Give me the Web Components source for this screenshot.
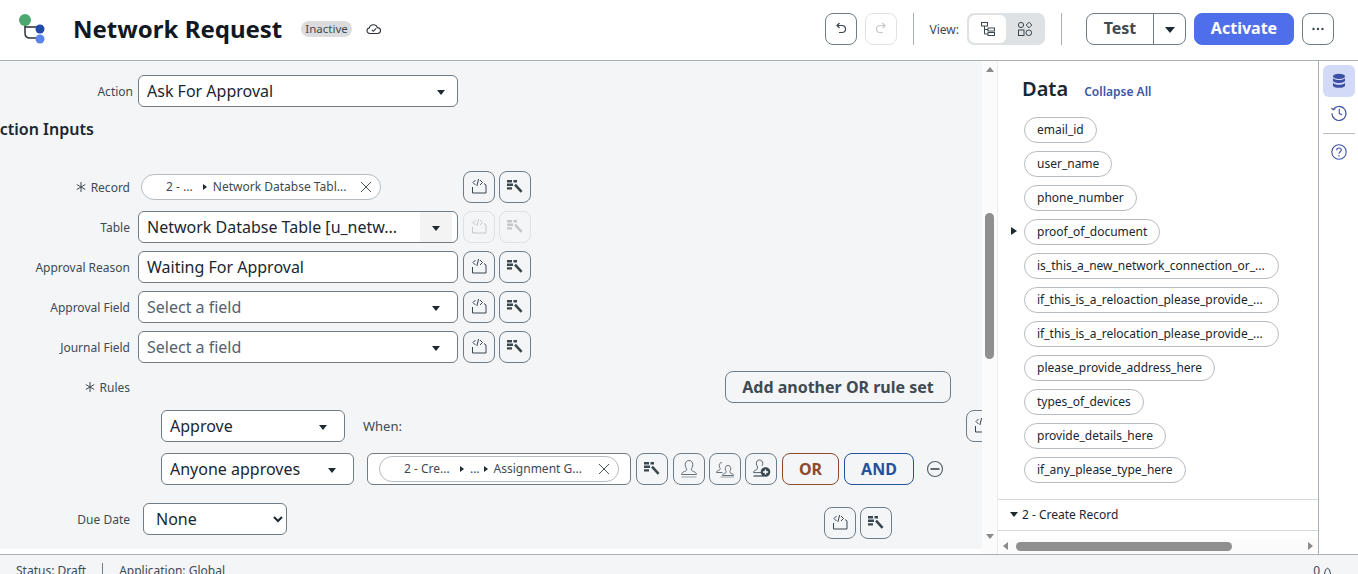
<!DOCTYPE html>
<html lang="en">
<head>
<meta charset="utf-8">
<title>Network Request</title>
<style>
  html, body { margin: 0; height: 574px; overflow: hidden; background: #fff; }
  body { font-family: "Noto Sans", "Liberation Sans", sans-serif; color: #1a2730; }
</style>
</head>
<body>
<flow-header></flow-header>
<flow-main></flow-main>
<status-bar></status-bar>

<script>
const ICONS = {
  code: `<path d="M9.500 16v6h13.500v-8l-2-1.500" fill="none" stroke="currentColor" stroke-width="1"/><path d="M12.500 9l-2.500 2.500 2.500 2.500M15.600 8l-1.700 7M17 9l2.500 2.500-2.500 2.500" fill="none" stroke="currentColor" stroke-width="1"/>`,
  pill: `<path fill="currentColor" d="M8 9h5v2.400H8zM14.500 9H18v2.400h-3.500zM8 12.600h6V15H8zM8 16.200h5v2.400H8z"/><path d="M16 13.600l6.600 7.200" stroke="currentColor" stroke-width="2.600"/>`,
  person: `<path d="M16 7.500c-2.500 0-3.800 2-3.800 4.200 0 2 1 3.200 1.400 4.400.3 1.200-.6 1.800-2 2.400-1.600.6-3 1-3 3h14.800c0-2-1.400-2.400-3-3-1.400-.6-2.300-1.200-2-2.400.4-1.200 1.400-2.400 1.400-4.400 0-2.200-1.300-4.200-3.800-4.200z" fill="none" stroke="#55626c" stroke-width=".9"/><path d="M8.500 24h15" stroke="#9aa3a9" stroke-width="1"/>`,
  group: `<path d="M13 9.500c-1.800 0-2.800 1.400-2.800 3 0 1.400.7 2.300 1 3.100.2.800-.4 1.300-1.400 1.700-1.200.5-2.300.8-2.300 2.200h6" fill="none" stroke="#55626c" stroke-width=".9"/><path d="M19 12.500c-1.800 0-2.800 1.400-2.800 3 0 1.400.7 2.300 1 3.100.2.800-.4 1.300-1.400 1.700-1.200.5-2.300.8-2.300 2.200h11c0-1.400-1.100-1.700-2.300-2.200-1-.4-1.600-.9-1.400-1.700.3-.8 1-1.700 1-3.100 0-1.600-1-3-2.800-3z" fill="none" stroke="#55626c" stroke-width=".9"/><path d="M11.500 24h13.500" stroke="#9aa3a9" stroke-width="1"/>`,
  personadd: `<path d="M14.500 7c-2 0-3.200 1.600-3.200 3.400 0 1.600.9 2.600 1.200 3.600.2 1.400-.3 2.400-1.500 3-1.300.6-2.500 1-2.500 2.600h8" fill="none" stroke="#55626c" stroke-width="1"/><path d="M8.500 23h10" stroke="#55626c" stroke-width="1.400"/><path d="M14.500 7c2 0 3.200 1.600 3.200 3.400 0 1-.3 1.800-.6 2.400" fill="none" stroke="#55626c" stroke-width="1"/><circle cx="20.500" cy="19" r="4.800" fill="#3a464e"/><path d="M20.500 16.400v5.200M17.900 19h5.200" stroke="#fff" stroke-width="1.400"/>`,
  undo: `<path d="M14.500 10l-2.500 2.500 2.500 2.500M12.500 12.500h4.500c2.200 0 3.500 1.500 3.500 3.500s-1.300 3.500-3.500 3.500h-3" fill="none" stroke="currentColor" stroke-width="1.200"/>`,
  redo: `<path d="M17.500 10l2.500 2.500-2.500 2.500M19.500 12.500H15c-2.200 0-3.500 1.500-3.500 3.500s1.300 3.500 3.500 3.500h3" fill="none" stroke="currentColor" stroke-width="1.200"/>`,
  dots: `<circle cx="11.500" cy="16" r="1.200" fill="currentColor"/><circle cx="16" cy="16" r="1.200" fill="currentColor"/><circle cx="20.500" cy="16" r="1.200" fill="currentColor"/>`
};

const svgIcon = (name, w = 32, h = 32) =>
  `<svg width="${w}" height="${h}" viewBox="0 0 32 32" style="display:block">${ICONS[name]}</svg>`;

class IconBtn extends HTMLElement {
  connectedCallback() {
    const off = this.hasAttribute("disabled");
    const w = this.getAttribute("w") || 32;
    this.attachShadow({ mode: "open" }).innerHTML = `
    <style>
    :host {
      display: block;
      flex: none;
      box-sizing: border-box;
      width: ${w}px;
      height: 32px;
      border: 1px solid ${off ? "#dfe2e4" : "#6f7c85"};
      border-radius: 8px;
      color: ${off ? "#c4c8cb" : "#3a464e"};
    }
    svg { margin: -1px 0 0 ${(w - 32) / 2 - 1}px; }
    </style>
    ${svgIcon(this.getAttribute("name"))}`;
  }
}
customElements.define("icon-btn", IconBtn);

class FlowButton extends HTMLElement {
  constructor() {
    super();
    this.attachShadow({ mode: "open" }).innerHTML = `
    <style>
    :host {
      display: flex;
      flex: none;
      box-sizing: border-box;
      height: 32px;
      align-items: center;
      justify-content: center;
      border: 1px solid #6f7c85;
      border-radius: 8px;
      font-size: 16px;
      font-weight: 700;
      color: #3f4a52;
    }
    :host([kind=or]) { border-color: #8d4a2b; color: #8d4a2b; }
    :host([kind=and]) { border-color: #24529b; color: #24529b; }
    :host([kind=primary]) { border-color: #4f6fea; background: #4f6fea; color: #fff; padding-bottom: 2px; }
    </style>
    <slot></slot>`;
  }
}
customElements.define("flow-button", FlowButton);

class FlowSelect extends HTMLElement {
  constructor() {
    super();
    this.attachShadow({ mode: "open" }).innerHTML = `
    <style>
    :host {
      display: flex;
      flex: none;
      box-sizing: border-box;
      height: 32px;
      align-items: center;
      padding: 0 5px 0 8px;
      background: #fff;
      border: 1px solid #6f7c85;
      border-radius: 6px;
      font-size: 16px;
      color: #1a2730;
    }
    :host([muted]) { color: #55626c; }
    .text { flex: 1; white-space: nowrap; overflow: hidden; padding-bottom: 1px; }
    .caret {
      flex: none;
      width: 32px;
      align-self: stretch;
      display: flex;
      align-items: center;
      justify-content: center;
    }
    :host([shaded]) .caret { background: #f3f3f3; }
    :host([narrow]) .caret { width: 22px; }
    :host([text-only]) .caret { display: none; }
    .caret i {
      margin-top: 3px;
      border: 4.500px solid transparent;
      border-top: 5px solid #1e2a32;
      border-bottom: 0;
    }
    </style>
    <span class="text"><slot></slot></span>
    <span class="caret"><i></i></span>`;
  }
}
customElements.define("flow-select", FlowSelect);

class FormRow extends HTMLElement {
  constructor() {
    super();
    this.attachShadow({ mode: "open" }).innerHTML = `
    <style>
    :host {
      display: flex;
      align-items: center;
      height: 32px;
      margin-top: 8px;
    }
    .label {
      flex: none;
      width: var(--label-w, 130px);
      display: flex;
      justify-content: flex-end;
      align-items: center;
      gap: 5px;
      font-size: 12px;
      color: #3d4a54;
      white-space: nowrap;
    }
    .star { display: block; flex: none; }
    .fields { display: flex; align-items: center; gap: 5px; margin-left: var(--label-gap, 8px); flex: 1; }
    .tools { display: flex; gap: 4px; }
    </style>
    <span class="label"></span>
    <div class="fields"><slot></slot><span class="tools"><slot name="tools"></slot></span></div>`;
    const label = this.shadowRoot.querySelector(".label");
    label.textContent = this.getAttribute("label") || "";
    if (this.hasAttribute("required")) {
      label.insertAdjacentHTML("afterbegin",
        `<svg class="star" width="10" height="10" viewBox="0 0 10 10" stroke="#3d4a54" stroke-width="1"><path d="M5 0v10M.7 2.500l8.600 5M9.300 2.500l-8.600 5"/></svg>`);
    }
  }
}
customElements.define("form-row", FormRow);

class RefPill extends HTMLElement {
  constructor() {
    super();
    this.attachShadow({ mode: "open" }).innerHTML = `
    <style>
    :host {
      display: flex;
      flex: none;
      box-sizing: border-box;
      height: 26px;
      align-items: center;
      padding: 0 8px 0 24px;
      background: #fff;
      border: 1px solid #b5bcc2;
      border-radius: 13px;
      font-size: 12px;
      color: #3d4a54;
      white-space: nowrap;
    }
    .path { flex: 1; display: flex; align-items: center; padding-bottom: 1px; }
    ::slotted(i) {
      display: block;
      margin: 0 6px 0 4px;
      border: 3.500px solid transparent;
      border-left: 4px solid #1e2a32;
      border-right: 0;
    }
    svg { flex: none; }
    </style>
    <span class="path"><slot></slot></span>
    <svg width="12" height="12" viewBox="0 0 12 12"><path d="M1 1l10 10M11 1L1 11" stroke="#48545c" stroke-width="1"/></svg>`;
  }
}
customElements.define("ref-pill", RefPill);

class ActionForm extends HTMLElement {
  constructor() {
    super();
    this.attachShadow({ mode: "open" }).innerHTML = `
    <style>
    :host {
      display: block;
      box-sizing: border-box;
      flex: none;
      width: 982px;
      height: 488px;
      padding-top: 6px;
      overflow: hidden;
      background: #f4f5f7;
    }
    h2 {
      margin: 11px 0 31px -11px;
      height: 22px;
      font-size: 16px;
      line-height: 22px;
      font-weight: 600;
      color: #1a2730;
      white-space: nowrap;
    }
    .wide { width: 320px; }
    .pill-slot { width: 320px; display: flex; padding-left: 3px; box-sizing: border-box; }
    .rules-add { margin: 0 26px 0 auto; width: 226px; }
    .row { display: flex; align-items: center; height: 32px; padding-left: 161px; }
    .when { margin-left: 18px; font-size: 13px; color: #3d4a54; }
    .edge { margin: 0 -16px 0 auto; }
    .ref {
      box-sizing: border-box;
      flex: none;
      display: flex;
      align-items: center;
      width: 264px;
      height: 32px;
      margin: 0 5px 0 13px;
      padding-left: 11px;
      background: #fff;
      border: 1px solid #6f7c85;
      border-radius: 6px;
    }
    .row .gap { display: flex; gap: 4px; align-items: center; }
    .minus { margin-left: 12px; display: block; }
    select {
      box-sizing: border-box;
      width: 144px;
      height: 32px;
      margin-left: 5px;
      padding-left: 8px;
      background: #fff;
      border: 1px solid #6f7c85;
      border-radius: 6px;
      font: 16px "Noto Sans", "Liberation Sans", sans-serif;
      color: #1a2730;
    }
    .due-tools { display: flex; gap: 4px; margin: 8px 85px 0 auto; }
    </style>
    <form-row label="Action" style="margin-top:8px;--label-w:133px;--label-gap:5px">
      <flow-select class="wide" narrow>Ask For Approval</flow-select>
    </form-row>
    <h2>Action Inputs</h2>
    <form-row label="Record" required>
      <div class="pill-slot">
        <ref-pill style="width:240px;padding-left:24px">2 - ...&nbsp;&nbsp;<i></i>Network Databse Tabl...</ref-pill>
      </div>
      <icon-btn slot="tools" name="code"></icon-btn>
      <icon-btn slot="tools" name="pill"></icon-btn>
    </form-row>
    <form-row label="Table">
      <flow-select class="wide" shaded>Network Databse Table [u_netw...</flow-select>
      <icon-btn slot="tools" name="code" disabled></icon-btn>
      <icon-btn slot="tools" name="pill" disabled></icon-btn>
    </form-row>
    <form-row label="Approval Reason">
      <flow-select class="wide" text-only>Waiting For Approval</flow-select>
      <icon-btn slot="tools" name="code"></icon-btn>
      <icon-btn slot="tools" name="pill"></icon-btn>
    </form-row>
    <form-row label="Approval Field">
      <flow-select class="wide" muted>Select a field</flow-select>
      <icon-btn slot="tools" name="code"></icon-btn>
      <icon-btn slot="tools" name="pill"></icon-btn>
    </form-row>
    <form-row label="Journal Field">
      <flow-select class="wide" muted>Select a field</flow-select>
      <icon-btn slot="tools" name="code"></icon-btn>
      <icon-btn slot="tools" name="pill"></icon-btn>
    </form-row>
    <form-row label="Rules" required>
      <flow-button class="rules-add">Add another OR rule set</flow-button>
    </form-row>
    <div class="row" style="margin-top:7px">
      <flow-select style="width:184px">Approve</flow-select>
      <span class="when">When:</span>
      <icon-btn class="edge" name="code"></icon-btn>
    </div>
    <div class="row" style="margin-top:11px">
      <flow-select style="width:193px">Anyone approves</flow-select>
      <div class="ref">
        <ref-pill style="width:240px">2 - Cre...&nbsp;&nbsp;<i></i>...<i></i>Assignment G...</ref-pill>
      </div>
      <div class="gap">
        <icon-btn name="pill"></icon-btn>
        <icon-btn name="person" style="margin-left:1px"></icon-btn>
        <icon-btn name="group"></icon-btn>
        <icon-btn name="personadd"></icon-btn>
        <flow-button kind="or" style="width:57px;margin-left:1px">OR</flow-button>
        <flow-button kind="and" style="width:70px;margin-left:1px">AND</flow-button>
      </div>
      <svg class="minus" width="18" height="18" viewBox="0 0 18 18"><circle cx="9" cy="9" r="7.500" fill="none" stroke="#55626c" stroke-width="1.200"/><path d="M4.500 9h9" stroke="#3a464e" stroke-width="1.600"/></svg>
    </div>
    <form-row label="Due Date" style="margin-top:18px">
      <select><option>None</option></select>
      <div class="due-tools"><icon-btn name="code"></icon-btn><icon-btn name="pill"></icon-btn></div>
    </form-row>`;
  }
}
customElements.define("action-form", ActionForm);

class VScroll extends HTMLElement {
  constructor() {
    super();
    this.attachShadow({ mode: "open" }).innerHTML = `
    <style>
    :host {
      display: flex;
      flex-direction: column;
      align-items: center;
      box-sizing: border-box;
      flex: none;
      width: 16px;
      height: 493px;
      padding-top: 6px;
      background: #fbfbfb;
      border-right: 1px solid #ececec;
    }
    .up { border: 4.500px solid transparent; border-bottom: 5px solid #8a8a8a; border-top: 0; }
    .down { border: 4.500px solid transparent; border-top: 5px solid #8a8a8a; border-bottom: 0; margin-top: 175px; }
    .thumb { width: 9px; height: 146px; margin-top: 141px; border-radius: 5px; background: #8f8f8f; }
    </style>
    <i class="up"></i><div class="thumb"></div><i class="down"></i>`;
  }
}
customElements.define("v-scroll", VScroll);

class DataPill extends HTMLElement {
  constructor() {
    super();
    this.attachShadow({ mode: "open" }).innerHTML = `
    <style>
    :host {
      display: block;
      position: relative;
      box-sizing: border-box;
      width: fit-content;
      height: 26px;
      margin: 0 0 8px 26px;
      padding: 0 12px;
      background: #fff;
      border: 1px solid #b5bcc2;
      border-radius: 13px;
      font-size: 12px;
      line-height: 24px;
      color: #1a2730;
      white-space: nowrap;
    }
    :host([expand])::before {
      content: "";
      position: absolute;
      left: -14px;
      top: 7px;
      border: 4.500px solid transparent;
      border-left: 6px solid #1e2a32;
      border-right: 0;
    }
    </style>
    <slot></slot>`;
  }
}
customElements.define("data-pill", DataPill);

class DataPanel extends HTMLElement {
  constructor() {
    super();
    this.attachShadow({ mode: "open" }).innerHTML = `
    <style>
    :host {
      display: block;
      box-sizing: border-box;
      flex: none;
      width: 321px;
      height: 493px;
      border-right: 1px solid #a9b1b6;
      background: #fff;
      overflow: hidden;
    }
    .head { display: flex; align-items: baseline; gap: 16px; height: 56px; padding: 13px 0 0 24px; box-sizing: border-box; }
    .head b { font-size: 20px; line-height: 30px; font-weight: 600; color: #1a2730; }
    .head span { font-size: 12px; font-weight: 600; color: #4055a8; }
    .list { height: 382px; }
    .section {
      display: flex;
      align-items: center;
      gap: 4px;
      height: 32px;
      padding: 0 0 2px 12px;
      border-top: 1px solid #d5d8db;
      border-bottom: 1px solid #d5d8db;
      box-sizing: border-box;
      font-size: 12px;
      color: #1a2730;
    }
    .section i { border: 4.500px solid transparent; border-top: 5px solid #1e2a32; border-bottom: 0; }
    .hbar { display: flex; align-items: center; height: 14px; margin-top: 8px; background: #fbfbfb; padding: 0 5px; }
    .hbar .l { border: 4.500px solid transparent; border-right: 5px solid #8a8a8a; border-left: 0; }
    .hbar .r { border: 4.500px solid transparent; border-left: 5px solid #8a8a8a; border-right: 0; margin-left: auto; }
    .thumb { width: 216px; height: 9px; margin-left: 8px; border-radius: 5px; background: #8f8f8f; }
    </style>
    <div class="head"><b>Data</b><span>Collapse All</span></div>
    <div class="list"><slot></slot></div>
    <div class="section"><i></i>2 - Create Record</div>
    <div class="hbar"><i class="l"></i><div class="thumb"></div><i class="r"></i></div>`;
  }
}
customElements.define("data-panel", DataPanel);

class SideRail extends HTMLElement {
  constructor() {
    super();
    this.attachShadow({ mode: "open" }).innerHTML = `
    <style>
    :host {
      display: flex;
      flex-direction: column;
      align-items: center;
      flex: 1;
      padding-top: 4px;
      color: #3c50a5;
    }
    .tab { width: 32px; height: 32px; display: flex; align-items: center; justify-content: center; }
    .on { background: #d3daf8; border-radius: 6px; }
    hr { width: 32px; margin: 4px 0 2px; border: 0; border-top: 1px solid #b5bcc2; }
    </style>
    <div class="tab on">
      <svg width="16" height="16" viewBox="0 0 16 16"><ellipse cx="8" cy="3.300" rx="6" ry="2.600" fill="currentColor"/><path fill="currentColor" d="M2 5.100c1 1.400 3.300 2 6 2s5-.6 6-2v2.500c0 1.400-2.700 2.500-6 2.500S2 9 2 7.600zM2 9.700c1 1.400 3.300 2 6 2s5-.6 6-2v2.700c0 1.400-2.700 2.400-6 2.400s-6-1-6-2.400z"/></svg>
    </div>
    <div class="tab">
      <svg width="18" height="18" viewBox="0 0 18 18" fill="none" stroke="currentColor" stroke-width="1.100"><path d="M3.200 5.500A7 7 0 1 1 2 9.200"/><path d="M1.500 3.800l1.700 2 2.200-1.300"/><path d="M9.300 4.800v4.600l2.800 1.600"/></svg>
    </div>
    <hr>
    <div class="tab">
      <svg width="18" height="18" viewBox="0 0 18 18" fill="none" stroke="currentColor" stroke-width="1.100"><circle cx="9" cy="9" r="7.200"/><path d="M6.700 7.200c0-1.400 1-2.200 2.300-2.200s2.300.8 2.300 2c0 1.700-2.300 1.800-2.300 3.700"/><path d="M9 12.200v1.300" stroke-width="1.300"/></svg>
    </div>`;
  }
}
customElements.define("side-rail", SideRail);

class FlowMain extends HTMLElement {
  constructor() {
    super();
    this.attachShadow({ mode: "open" }).innerHTML = `
    <style>
    :host { display: flex; height: 493px; background: #fff; }
    .long { width: 255px; }
    </style>
    <action-form></action-form>
    <v-scroll></v-scroll>
    <data-panel>
      <data-pill>email_id</data-pill>
      <data-pill>user_name</data-pill>
      <data-pill>phone_number</data-pill>
      <data-pill expand>proof_of_document</data-pill>
      <data-pill class="long">is_this_a_new_network_connection_or_...</data-pill>
      <data-pill class="long">if_this_is_a_reloaction_please_provide_...</data-pill>
      <data-pill class="long">if_this_is_a_relocation_please_provide_...</data-pill>
      <data-pill>please_provide_address_here</data-pill>
      <data-pill>types_of_devices</data-pill>
      <data-pill>provide_details_here</data-pill>
      <data-pill>if_any_please_type_here</data-pill>
    </data-panel>
    <side-rail></side-rail>`;
  }
}
customElements.define("flow-main", FlowMain);

class FlowHeader extends HTMLElement {
  constructor() {
    super();
    this.attachShadow({ mode: "open" }).innerHTML = `
    <style>
    :host {
      display: flex;
      align-items: flex-start;
      box-sizing: border-box;
      height: 61px;
      padding: 13px 24px 0 0;
      background: #fff;
      border-bottom: 1px solid #a9b1b6;
    }
    .logo { display: block; margin: -1px 0 0 16px; flex: none; }
    h1 {
      margin: -1px 0 0 25px;
      font-size: 24px;
      line-height: 33px;
      font-weight: 700;
      color: #11181f;
      white-space: nowrap;
    }
    .badge {
      margin: 8px 0 0 19px;
      padding: 0 4px;
      height: 16px;
      line-height: 16px;
      border-radius: 8px;
      background: #dcdcdf;
      font-size: 11.500px;
      color: #3d4a54;
    }
    .cloud { display: block; margin: 9px 0 0 14px; }
    .right { margin-left: auto; display: flex; align-items: center; height: 32px; }
    .sep { width: 1px; height: 32px; background: #a9b1b6; margin: 0 16px; }
    .view { font-size: 12px; color: #3d4a54; margin-right: 8px; }
    .toggle {
      display: flex;
      box-sizing: border-box;
      width: 78px;
      height: 32px;
      padding: 2px;
      border-radius: 7px;
      background: #dfe2e5;
    }
    .toggle div { width: 39px; display: flex; align-items: center; justify-content: center; border-radius: 6px; color: #3a464e; }
    .toggle .on { background: #fff; }
    .test { display: flex; width: 100px; height: 32px; margin-left: 8px; box-sizing: border-box; border: 1px solid #6f7c85; border-radius: 8px; font-size: 16px; font-weight: 700; color: #3f4a52; }
    .test span { width: 67px; display: flex; align-items: center; justify-content: center; border-right: 1px solid #6f7c85; padding-bottom: 2px; box-sizing: border-box; }
    .test div { flex: 1; display: flex; align-items: center; justify-content: center; }
    .test i { border: 5px solid transparent; border-top: 6px solid #1e2a32; border-bottom: 0; margin-top: 2px; }
    </style>
    <svg class="logo" width="32" height="36" viewBox="0 0 32 36">
      <path d="M9 8v13c0 3 2 5 5 5h7M9 15h12" fill="none" stroke="#2b3136" stroke-width="1.500"/>
      <circle cx="9" cy="8" r="6" fill="#4ca86f"/>
      <circle cx="24" cy="17" r="4.500" fill="#1f4aa8"/>
      <circle cx="24" cy="27" r="4.500" fill="#5b84ec"/>
    </svg>
    <h1>Network Request</h1>
    <span class="badge">Inactive</span>
    <svg class="cloud" width="16" height="14" viewBox="0 0 16 14" fill="none" stroke="#2b3136" stroke-width="1.100"><path d="M4 11.500c-1.800 0-3-1.200-3-2.800 0-1.400 1-2.500 2.300-2.700C3.800 4 5.400 2.800 7.400 2.800c1.900 0 3.400 1.200 3.900 2.800 1.800 0 3.200 1.200 3.200 3 0 1.700-1.300 2.900-3 2.900z"/><path d="M5.800 7.800l1.500 1.500 2.900-2.900"/></svg>
    <div class="right">
      <icon-btn name="undo"></icon-btn>
      <icon-btn name="redo" disabled style="margin-left:8px"></icon-btn>
      <span class="sep"></span>
      <span class="view">View:</span>
      <div class="toggle">
        <div class="on"><svg width="16" height="16" viewBox="0 0 16 16" fill="none" stroke="currentColor"><rect x="1.500" y="1.500" width="6" height="3.500"/><rect x="8" y="7" width="6.500" height="3"/><rect x="8" y="11.500" width="6.500" height="3"/><path d="M4.500 5v8H8M4.500 8.500H8"/></svg></div>
        <div><svg width="16" height="16" viewBox="0 0 16 16" fill="none" stroke="currentColor"><circle cx="4" cy="4" r="2.600"/><path d="M12 1.200l2.800 2.800-2.800 2.800L9.200 4z"/><rect x="1.500" y="9" width="5.500" height="5.500"/><circle cx="11.800" cy="11.800" r="2.800"/></svg></div>
      </div>
      <span class="sep"></span>
      <div class="test"><span>Test</span><div><i></i></div></div>
      <flow-button kind="primary" style="width:100px;margin-left:8px">Activate</flow-button>
      <icon-btn name="dots" style="margin-left:8px"></icon-btn>
    </div>`;
  }
}
customElements.define("flow-header", FlowHeader);

class StatusBar extends HTMLElement {
  constructor() {
    super();
    this.attachShadow({ mode: "open" }).innerHTML = `
    <style>
    :host {
      display: flex;
      align-items: flex-start;
      box-sizing: border-box;
      height: 20px;
      padding: 8px 0 0 16px;
      overflow: hidden;
      background: #f4f5f7;
      border-top: 1px solid #a9b1b6;
      font-size: 12px;
      line-height: 16px;
      color: #3d4a54;
    }
    .bar { width: 1px; height: 20px; background: #6f7c85; margin: 0 16px; }
    .count { margin-left: auto; margin-right: 2px; }
    svg { display: block; margin: 3px 25px 0 0; }
    </style>
    <span>Status: Draft</span><span class="bar"></span><span>Application: Global</span>
    <span class="count">0</span>
    <svg width="11" height="14" viewBox="0 0 11 14" fill="none" stroke="#3d4a54"><path d="M1 13L3.500 4Q5.500 .5 7.500 4L10 13"/></svg>`;
  }
}
customElements.define("status-bar", StatusBar);
</script>
</body>
</html>
